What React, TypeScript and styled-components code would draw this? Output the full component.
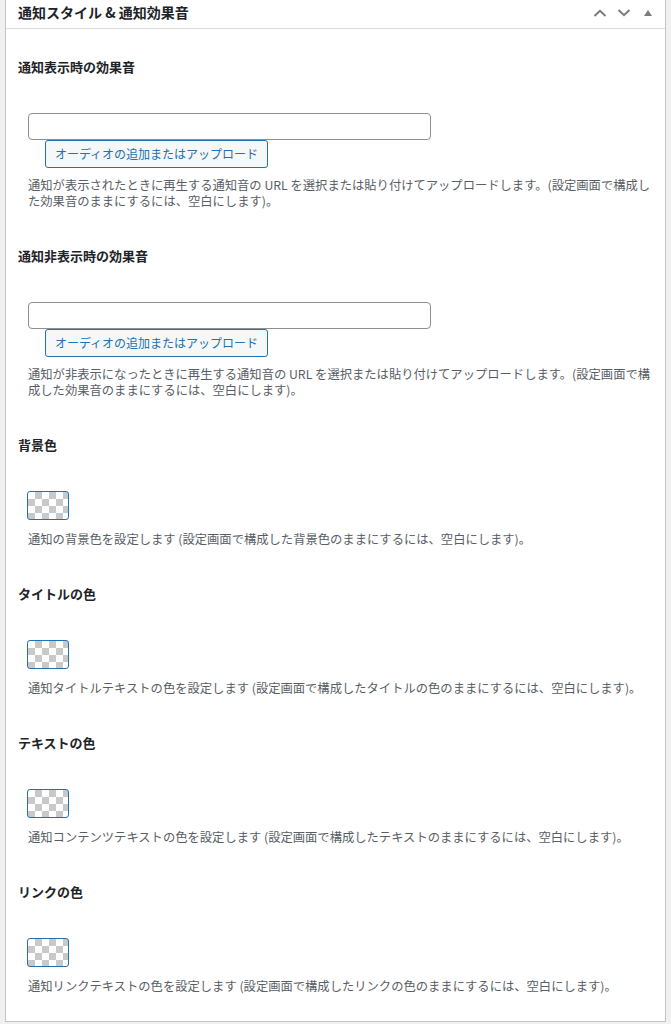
import React from "react";
import styled, { createGlobalStyle } from "styled-components";

const Global = createGlobalStyle`
  html, body { margin: 0; padding: 0; background: #f0f0f1; }
  body {
    font-family: "Noto Sans CJK JP", "Noto Sans", sans-serif;
    color: #1d2327;
    -webkit-font-smoothing: antialiased;
  }
`;

const Page = styled.div`
  padding: 0 5px;
`;

const Panel = styled.section`
  background: #fff;
  border: 1px solid #c3c4c7;
  border-top: none;
  height: 1022px;
  box-sizing: border-box;
`;

const Header = styled.div`
  display: flex;
  align-items: center;
  height: 29px;
  padding: 0 0 3px 12px;
  box-sizing: border-box;
  border-bottom: 1px solid #dcdcde;
`;

const Title = styled.h2`
  flex: 1;
  margin: 0;
  font-size: 14px;
  font-weight: 700;
  line-height: 1.4;
`;

const Handles = styled.div`
  display: flex;
  align-items: center;
  gap: 10px;
  padding-right: 10px;
  color: #787c82;
`;

const HandleBtn = styled.span`
  display: flex;
  width: 14px;
  justify-content: center;
`;

const Body = styled.div`
  padding: 28px 8px 0 12px;
`;

const Field = styled.div<{ $gap: number }>`
  margin-bottom: ${(p) => p.$gap}px;
`;

const Label = styled.h4`
  margin: 0 0 36px;
  font-size: 13px;
  font-weight: 700;
  line-height: 20px;
`;

const Control = styled.div`
  padding-left: 10px;
`;

const TextInput = styled.input`
  display: block;
  width: 403px;
  height: 27px;
  box-sizing: border-box;
  border: 1px solid #8c8f94;
  border-radius: 4px;
  background: #fff;
  margin: 0;
`;

const UploadButton = styled.button`
  display: block;
  margin: 0 0 0 17px;
  width: 223px;
  height: 28px;
  padding: 0;
  box-sizing: border-box;
  border: 1px solid #2271b1;
  border-radius: 3px;
  background: #f6f7f7;
  color: #2271b1;
  font-family: inherit;
  font-size: 12px;
  line-height: 26px;
`;

const Swatch = styled.button`
  display: block;
  width: 42px;
  height: 29px;
  padding: 0;
  margin: 0 0 0 -1px;
  box-sizing: border-box;
  border: 1px solid #2271b1;
  border-radius: 3px;
  background-color: #fff;
  background-image: conic-gradient(#c9c9c9 25%, #fff 0 50%, #c9c9c9 0 75%, #fff 0);
  background-size: 14px 14px;
  background-position: 0 0;
`;

const Desc = styled.p<{ $top: number }>`
  margin: ${(p) => p.$top}px 0 0;
  font-size: 12.3px;
  line-height: 16px;
  color: #585e65;
`;

const ChevronUp = () => (
  <svg width="14" height="8" viewBox="0 0 14 8" fill="none">
    <path d="M1.5 7L7 1.8 12.5 7" stroke="currentColor" strokeWidth="2" />
  </svg>
);

const ChevronDown = () => (
  <svg width="14" height="8" viewBox="0 0 14 8" fill="none">
    <path d="M1.5 1L7 6.2 12.5 1" stroke="currentColor" strokeWidth="2" />
  </svg>
);

const Triangle = () => (
  <svg width="8" height="6" viewBox="0 0 8 6">
    <path d="M0 6L4 0 8 6Z" fill="currentColor" />
  </svg>
);

const audioFields = [
  {
    label: "通知表示時の効果音",
    desc: "通知が表示されたときに再生する通知音の URL を選択または貼り付けてアップロードします。(設定画面で構成した効果音のままにするには、空白にします)。",
  },
  {
    label: "通知非表示時の効果音",
    desc: "通知が非表示になったときに再生する通知音の URL を選択または貼り付けてアップロードします。(設定画面で構成した効果音のままにするには、空白にします)。",
  },
];

const colorFields = [
  {
    label: "背景色",
    desc: "通知の背景色を設定します (設定画面で構成した背景色のままにするには、空白にします)。",
  },
  {
    label: "タイトルの色",
    desc: "通知タイトルテキストの色を設定します (設定画面で構成したタイトルの色のままにするには、空白にします)。",
  },
  {
    label: "テキストの色",
    desc: "通知コンテンツテキストの色を設定します (設定画面で構成したテキストのままにするには、空白にします)。",
  },
  {
    label: "リンクの色",
    desc: "通知リンクテキストの色を設定します (設定画面で構成したリンクの色のままにするには、空白にします)。",
  },
];

export default function App() {
  return (
    <Page>
      <Global />
      <Panel>
        <Header>
          <Title>通知スタイル &amp; 通知効果音</Title>
          <Handles>
            <HandleBtn><ChevronUp /></HandleBtn>
            <HandleBtn><ChevronDown /></HandleBtn>
            <HandleBtn><Triangle /></HandleBtn>
          </Handles>
        </Header>
        <Body>
          {audioFields.map((f) => (
            <Field key={f.label} $gap={37}>
              <Label>{f.label}</Label>
              <Control>
                <TextInput type="text" />
                <UploadButton>オーディオの追加またはアップロード</UploadButton>
                <Desc $top={9}>{f.desc}</Desc>
              </Control>
            </Field>
          ))}
          {colorFields.map((f) => (
            <Field key={f.label} $gap={37}>
              <Label>{f.label}</Label>
              <Control>
                <Swatch aria-label={f.label} />
                <Desc $top={11}>{f.desc}</Desc>
              </Control>
            </Field>
          ))}
        </Body>
      </Panel>
    </Page>
  );
}
